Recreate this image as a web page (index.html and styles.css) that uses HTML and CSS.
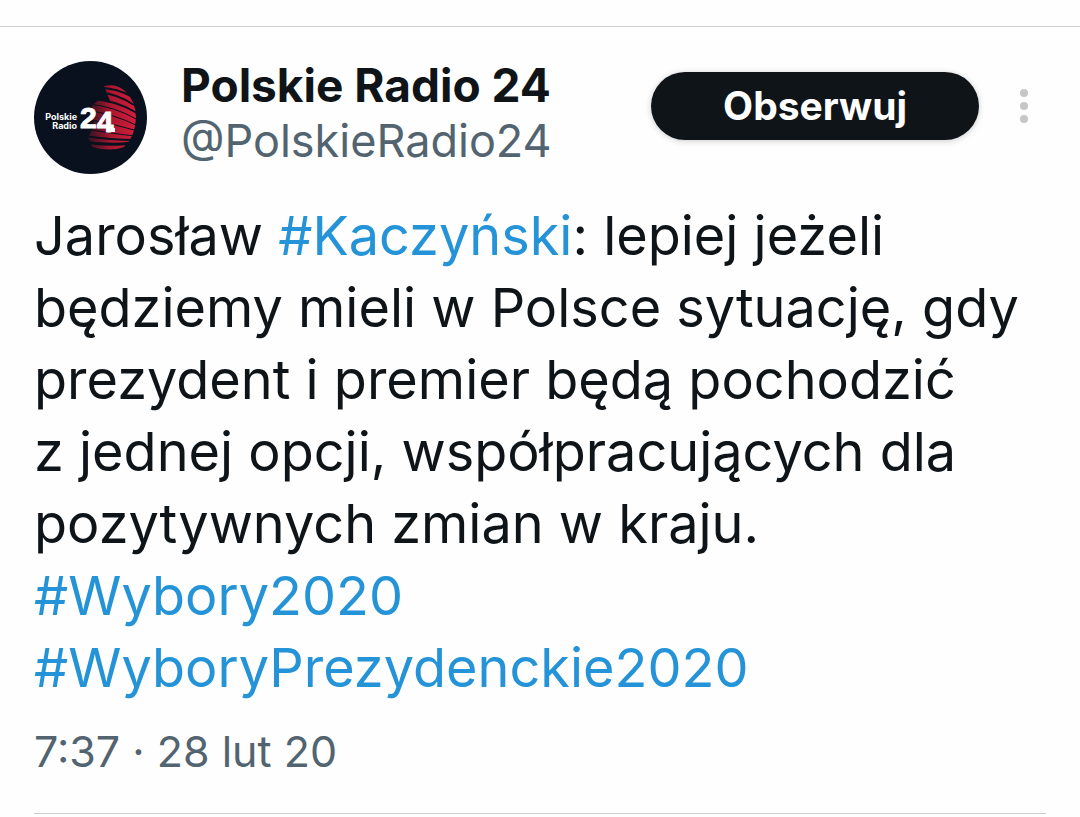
FILE: index.html
```html
<!DOCTYPE html>
<html lang="pl">
<head>
  <meta charset="UTF-8">
  <title>Polskie Radio 24</title>
  <meta name="viewport" content="width=device-width, initial-scale=1.0">
  <link rel="stylesheet" href="styles.css">
</head>
<body>

  <article class="tweet">
    <header class="tweet-header">
      <a class="avatar" href="#" aria-label="Polskie Radio 24">
        <svg viewBox="0 0 113 113" aria-hidden="true">
          <defs>
            <linearGradient id="globe" gradientUnits="userSpaceOnUse" x1="50" y1="0" x2="102" y2="0">
              <stop offset="0" stop-color="#7a1428" stop-opacity="0.3"/>
              <stop offset="0.5" stop-color="#a8172f"/>
              <stop offset="1" stop-color="#d41d3c"/>
            </linearGradient>
          </defs>
          <circle cx="56.5" cy="56.5" r="56.5" fill="#08111d"/>
          <path d="M70 25 Q82 22 91 30 Q102 40 102 57 Q101 76 90 86 Q76 91 58 86 L54 76 L60 66 L58 44 L64 40 L76 40 Z" fill="url(#globe)"/>
          <!-- dark bands across the globe -->
          <g fill="none" stroke="#08111d">
            <path d="M66 27 Q82 27 97 35" stroke-width="2"/>
            <path d="M64 31 Q84 33 100 44" stroke-width="2"/>
            <path d="M56 38 Q82 39 103 52" stroke-width="2"/>
            <path d="M54 43 Q80 45 104 59"/>
            <path d="M52 49 Q80 53 104 65"/>
            <path d="M52 58 Q80 63 104 70"/>
            <path d="M52 68 Q80 73 102 75"/>
            <path d="M50 75 Q78 79 100 79" stroke-width="2"/>
            <path d="M50 81 Q76 85 98 82" stroke-width="3"/>
          </g>
          <text class="logo-name" x="43" y="59" text-anchor="end">Polskie</text>
          <text class="logo-name" x="43" y="68" text-anchor="end">Radio</text>
          <text class="logo-number" x="46" y="67">2<tspan dy="4">4</tspan></text>
          <rect x="77" y="67" width="4" height="4" fill="#fff"/>
        </svg>
      </a>
      <div class="author">
        <a class="author-name" href="#">Polskie Radio 24</a>
        <a class="author-handle" href="#">@PolskieRadio24</a>
      </div>
      <button class="follow" type="button">Obserwuj</button>
      <button class="more" type="button" aria-label="Więcej">
        <svg viewBox="0 0 10 36" aria-hidden="true">
          <circle cx="5" cy="5" r="4"/>
          <circle cx="5" cy="18" r="4"/>
          <circle cx="5" cy="31" r="4"/>
        </svg>
      </button>
    </header>

    <p class="tweet-text">Jarosław <a href="#">#Kaczyński</a>: lepiej jeżeli będziemy mieli w Polsce sytuację, gdy prezydent i premier będą pochodzić z&nbsp;jednej opcji, współpracujących dla pozytywnych zmian w kraju. <a href="#">#Wybory2020</a> <a href="#">#WyboryPrezydenckie2020</a></p>

    <time class="tweet-date" datetime="2020-02-28T07:37">7:37 · 28 lut 20</time>
  </article>

</body>
</html>
```
FILE: styles.css
```css
body {
  margin: 0;
  padding-top: 26px;
  background-color: #fefefe;
  color: #0f1419;
  font-family: Inter, sans-serif;
}

a {
  color: inherit;
  text-decoration: none;
}

button {
  padding: 0;
  border: none;
  font-family: inherit;
  cursor: pointer;
}

.tweet {
  padding: 31px 34px 0;
  border-top: 1px solid #cfcfd1;
}

.tweet-header {
  display: flex;
  align-items: flex-start;
}

.avatar {
  width: 113px;
  height: 113px;
  margin: 3px 34px 0 0;
}

.avatar svg {
  display: block;
}

.logo-name {
  fill: #fff;
  font-size: 9px;
  font-weight: 700;
}

.logo-number {
  fill: #fff;
  stroke: #fff;
  stroke-width: 1px;
  font-family: "Liberation Sans", sans-serif;
  font-size: 30px;
  font-weight: 700;
}

.author {
  display: flex;
  flex-direction: column;
  flex: 1;
  line-height: 55px;
}

.author-name {
  font-size: 46px;
  font-weight: 700;
}

.author-handle {
  color: #536471;
  font-size: 45px;
}

.follow {
  margin-top: 14px;
  padding: 0 72px;
  border-radius: 34px;
  background-color: #0f1419;
  box-shadow: 0 1px 6px rgba(0, 0, 0, 0.2);
  color: #fff;
  font-size: 39px;
  font-weight: 700;
  line-height: 68px;
}

.more {
  margin: 30px 17px 0 40px;
  background: none;
}

.more svg {
  display: block;
  width: 10px;
  height: 36px;
  fill: #c4c6c8;
}

.tweet-text {
  margin: 26px 0 0;
  font-size: 54px;
  line-height: 72px;
}

.tweet-text a {
  color: #2493d8;
}

.tweet-date {
  display: block;
  padding: 14px 0 29px;
  border-bottom: 1px solid #cfcfd1;
  color: #536471;
  font-size: 43px;
  line-height: 66px;
}
```
